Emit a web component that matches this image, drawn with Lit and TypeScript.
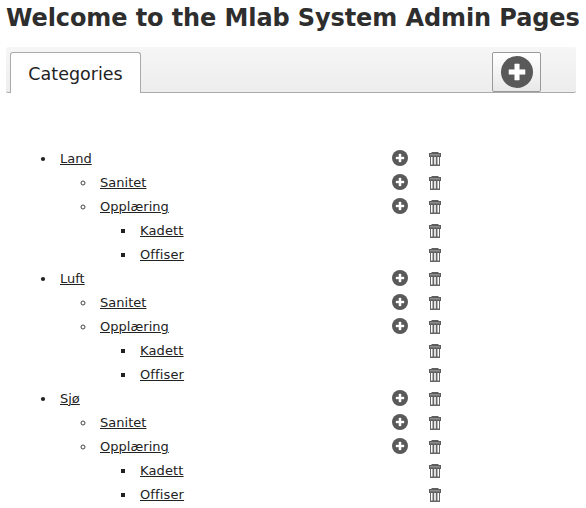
import { LitElement, html, css, svg, nothing, type TemplateResult } from "lit";
import { customElement } from "lit/decorators.js";

interface Category {
  name: string;
  add?: boolean;
  children?: Category[];
}

const branch = (name: string): Category => ({
  name,
  add: true,
  children: [
    { name: "Sanitet", add: true },
    { name: "Opplæring", add: true, children: [{ name: "Kadett" }, { name: "Offiser" }] },
  ],
});

const categories: Category[] = ["Land", "Luft", "Sjø"].map(branch);

const plusIcon = (size: number) => html`
  <svg width=${size} height=${size} viewBox="0 0 32 32">
    <circle cx="16" cy="16" r="16" fill="#595959" />
    <path d="M13.8 8h4.4v5.8H24v4.4h-5.8V24h-4.4v-5.8H8v-4.4h5.8z" fill="#fff" stroke="#fff" stroke-width=".6" stroke-linejoin="round" />
  </svg>`;

const trashIcon = html`
  <svg width="12" height="14" viewBox="0 0 12 14">
    <path d="M2.5 0h7v1H12v4H0V1h2.5z" fill="#5e5e5e" />
    <path d="M1 2h10v1.6H1z" fill="#8c8c8c" />
    <path d="M1 5h10v9H1z" fill="#666" />
    <path d="M2 5h1.5v7.6H2zM5.2 5h1.6v7.6H5.2zM8.5 5h1.5v7.6H8.5z" fill="#fff" />
  </svg>`;

const markers = [
  svg`<circle cx="3" cy="3" r="2.1" fill="#222" />`,
  svg`<circle cx="3" cy="3" r="2" fill="none" stroke="#444" />`,
  svg`<rect x="1" y="1" width="4" height="4" fill="#222" />`,
];

@customElement("app-root")
class AppRoot extends LitElement {
  static styles = css`
    :host {
      display: block;
      height: 508px;
      overflow: hidden;
      background: #fff;
      color: #222;
      font-family: "DejaVu Sans", Verdana, sans-serif;
      font-variant-ligatures: none;
    }
    h1 {
      box-sizing: border-box;
      height: 47px;
      margin: 0;
      padding: 2px 0 0 6px;
      color: #2e2e2e;
      font-size: 24px;
      line-height: 32px;
      letter-spacing: -0.1px;
      white-space: nowrap;
    }
    .bar {
      box-sizing: border-box;
      display: flex;
      align-items: flex-end;
      justify-content: space-between;
      height: 46px;
      margin: 0 10px 0 6px;
      padding: 0 35px 0 4px;
      border-bottom: 1px solid #aaa;
      border-radius: 2px;
      background: linear-gradient(#f6f6f6, #ededed);
    }
    .tab {
      box-sizing: border-box;
      width: 131px;
      height: 41px;
      margin-bottom: -1px;
      border: 1px solid #aaa;
      border-bottom: 0;
      border-radius: 3px 3px 0 0;
      background: #fff;
      text-align: center;
      font-size: 17.5px;
      line-height: 43px;
    }
    button {
      display: flex;
      align-items: center;
      justify-content: center;
      padding: 0;
      border: 0;
      background: none;
    }
    .add {
      box-sizing: border-box;
      width: 49px;
      height: 40px;
      border: 1px solid #999;
      border-radius: 2px;
      background: linear-gradient(#fff, #e8e8e8);
    }
    svg {
      display: block;
    }
    ul {
      list-style: none;
      margin: 0;
      padding: 0;
    }
    .list {
      padding-top: 53px;
    }
    .row {
      display: grid;
      grid-template-columns: 352px 32px 22px;
      grid-template-rows: 24px;
      align-items: center;
      height: 24px;
      padding-left: 40px;
      font-size: 13px;
      line-height: 22px;
    }
    .name {
      display: flex;
      align-items: center;
      padding-top: 2px;
    }
    .depth1 {
      padding-left: 40px;
    }
    .depth2 {
      padding-left: 80px;
    }
    .mark {
      width: 6px;
      height: 6px;
      margin-right: 14px;
    }
    .name a {
      color: inherit;
      text-decoration: underline;
      text-underline-offset: 1px;
      text-decoration-thickness: 1px;
    }
    .depth1 a {
      letter-spacing: 0.03px;
    }
    .depth2 a {
      letter-spacing: 0.14px;
    }
    .plus {
      width: 16px;
    }
    .trash {
      grid-column: 3;
      justify-self: center;
      padding-top: 1px;
    }
  `;

  private item(node: Category, depth: number): TemplateResult {
    return html`<li>
      <div class="row">
        <div class="name depth${depth}">
          <svg class="mark" viewBox="0 0 6 6">${markers[depth]}</svg>
          <a>${node.name}</a>
        </div>
        ${node.add ? html`<button class="plus" aria-label="Add">${plusIcon(16)}</button>` : nothing}
        <button class="trash" aria-label="Delete">${trashIcon}</button>
      </div>
      ${node.children ? html`<ul>${node.children.map((c) => this.item(c, depth + 1))}</ul>` : nothing}
    </li>`;
  }

  render() {
    return html`
      <h1>Welcome to the Mlab System Admin Pages</h1>
      <div class="bar">
        <div class="tab">Categories</div>
        <button class="add" aria-label="Add category">${plusIcon(32)}</button>
      </div>
      <ul class="list">${categories.map((c) => this.item(c, 0))}</ul>
    `;
  }
}
